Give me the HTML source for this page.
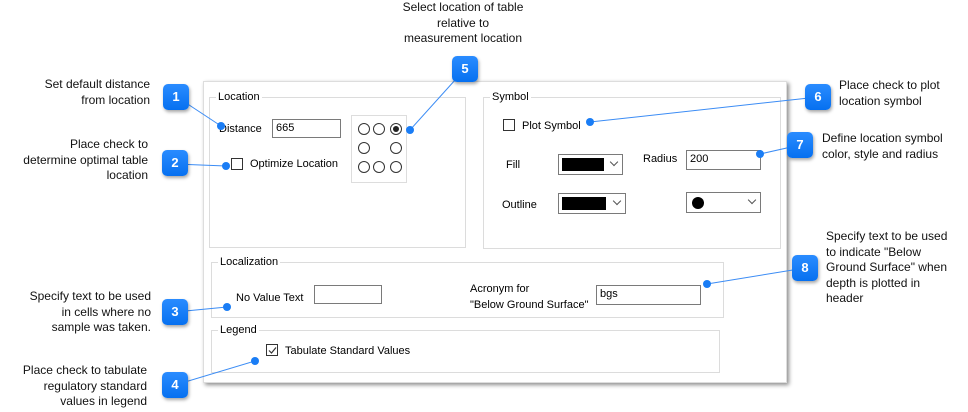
<!DOCTYPE html>
<html><head><style>
body{margin:0;width:968px;height:412px;background:#fff;position:relative;overflow:hidden;font-family:"Liberation Sans",Arial,sans-serif;}
.a{position:absolute;}
.t{position:absolute;font-size:12px;line-height:15.5px;color:#111;white-space:nowrap;}
.r{text-align:right;}
.panel{position:absolute;left:203px;top:81px;width:584px;height:302px;background:#fff;box-shadow:2px 2px 4px rgba(0,0,0,.45);border:1px solid #ddd;box-sizing:border-box;}
.g{position:absolute;border:1px solid #dcdcdc;}
.gl{position:absolute;background:#fff;font-size:11px;padding:0 2px;color:#000;top:-8px;left:6px;line-height:14px;}
.lb{position:absolute;font-size:11px;color:#000;white-space:nowrap;line-height:13px;}
.in{position:absolute;border:1px solid #7a7a7a;background:#fff;font-size:11px;box-sizing:border-box;padding:1px 3px;line-height:15px;}
.cb{position:absolute;width:12px;height:12px;border:1px solid #333;box-sizing:border-box;background:#fff;}
.rad{position:absolute;width:12px;height:12px;border:1px solid #333;border-radius:50%;box-sizing:border-box;}
.call{position:absolute;width:26px;height:26px;border-radius:5px;background:linear-gradient(#2a8cff,#0670f0);color:#fff;font-weight:bold;font-size:13px;text-align:center;line-height:26px;box-shadow:1px 2px 3px rgba(0,0,0,.35);}
.dd{position:absolute;border:1px solid #7a7a7a;background:#fff;box-sizing:border-box;}
.sw{position:absolute;left:3px;top:3px;background:#000;}
.chev{position:absolute;right:5px;top:4px;width:5px;height:5px;border-right:1px solid #555;border-bottom:1px solid #555;transform:rotate(45deg);}
</style></head><body>

<div class="t" style="left:392px;top:0px;width:142px;text-align:center;">Select location of table<br>relative to<br>measurement location</div>
<div class="t r" style="left:0;top:77px;width:150px;">Set default distance<br>from location</div>
<div class="t r" style="left:0;top:137px;width:148px;">Place check to<br>determine optimal table<br>location</div>
<div class="t r" style="left:0;top:289px;width:151px;">Specify text to be used<br>in cells where no<br>sample was taken.</div>
<div class="t r" style="left:0;top:363px;width:147px;">Place check to tabulate<br>regulatory standard<br>values in legend</div>
<div class="t" style="left:839px;top:78px;">Place check to plot<br>location symbol</div>
<div class="t" style="left:822px;top:131px;">Define location symbol<br>color, style and radius</div>
<div class="t" style="left:826px;top:229px;">Specify text to be used<br>to indicate "Below<br>Ground Surface" when<br>depth is plotted in<br>header</div>

<div class="panel"></div>
<!-- Location -->
<div class="g" style="left:209px;top:97px;width:255px;height:149px;"><div class="gl">Location</div></div>
<div class="lb" style="left:219px;top:123px;">Distance</div>
<div class="in" style="left:272px;top:119px;width:69px;height:19px;">665</div>
<div class="a" style="left:351px;top:115px;width:56px;height:68px;border:1px solid #ddd;box-sizing:border-box;"></div>
<div class="rad" style="left:358px;top:123px;"></div><div class="rad" style="left:373px;top:123px;"></div>
<div class="rad" style="left:390px;top:123px;"><div class="a" style="left:2px;top:2px;width:6px;height:6px;border-radius:50%;background:#222;"></div></div>
<div class="rad" style="left:358px;top:142px;"></div><div class="rad" style="left:390px;top:142px;"></div>
<div class="rad" style="left:358px;top:161px;"></div><div class="rad" style="left:373px;top:161px;"></div><div class="rad" style="left:390px;top:161px;"></div>
<div class="cb" style="left:231px;top:158px;"></div>
<div class="lb" style="left:250px;top:158px;">Optimize Location</div>
<!-- Symbol -->
<div class="g" style="left:483px;top:97px;width:296px;height:150px;"><div class="gl">Symbol</div></div>
<div class="cb" style="left:503px;top:119px;"></div>
<div class="lb" style="left:522px;top:120px;">Plot Symbol</div>
<div class="lb" style="left:506px;top:159px;">Fill</div>
<div class="dd" style="left:558px;top:154px;width:65px;height:21px;"><div class="sw" style="width:42px;height:13px;"></div><div class="chev"></div></div>
<div class="lb" style="left:502px;top:199px;">Outline</div>
<div class="dd" style="left:558px;top:193px;width:68px;height:21px;"><div class="sw" style="width:44px;height:13px;"></div><div class="chev"></div></div>
<div class="lb" style="left:643px;top:153px;">Radius</div>
<div class="in" style="left:686px;top:150px;width:75px;height:20px;">200</div>
<div class="dd" style="left:686px;top:192px;width:75px;height:21px;"><div class="a" style="left:5px;top:4px;width:12px;height:12px;border-radius:50%;background:#000;"></div><div class="chev"></div></div>
<!-- Localization -->
<div class="g" style="left:211px;top:262px;width:511px;height:54px;"><div class="gl">Localization</div></div>
<div class="lb" style="left:236px;top:292px;">No Value Text</div>
<div class="in" style="left:314px;top:285px;width:68px;height:19px;"></div>
<div class="lb" style="left:470px;top:281px;line-height:16px;">Acronym for<br>"Below Ground Surface"</div>
<div class="in" style="left:596px;top:285px;width:105px;height:20px;">bgs</div>
<!-- Legend -->
<div class="g" style="left:211px;top:330px;width:507px;height:41px;"><div class="gl">Legend</div></div>
<div class="cb" style="left:266px;top:344px;"><svg class="a" style="left:1px;top:1px" width="9" height="9"><path d="M1 4.5 L3.5 7 L8 1.5" stroke="#333" stroke-width="1.2" fill="none"/></svg></div>
<div class="lb" style="left:285px;top:345px;">Tabulate Standard Values</div>

<svg class="a" style="left:0;top:0" width="968" height="412">
<g stroke="#3b8cf5" stroke-width="1" fill="none">
<line x1="177" y1="97" x2="221" y2="126"/>
<line x1="175" y1="164" x2="226" y2="166"/>
<line x1="175" y1="312" x2="227" y2="307"/>
<line x1="175" y1="385" x2="255" y2="361"/>
<line x1="465" y1="69" x2="410" y2="130"/>
<line x1="818" y1="97" x2="590" y2="122"/>
<line x1="800" y1="145" x2="760" y2="154"/>
<line x1="805" y1="268" x2="707" y2="284"/>
</g>
<g fill="#1a7df5">
<circle cx="221" cy="126" r="4"/><circle cx="226" cy="166" r="4"/><circle cx="227" cy="307" r="4"/><circle cx="255" cy="361" r="4"/>
<circle cx="410" cy="130" r="4"/><circle cx="590" cy="122" r="4"/><circle cx="760" cy="154" r="4"/><circle cx="707" cy="284" r="4"/>
</g></svg>
<div class="call" style="left:163px;top:84px;">1</div>
<div class="call" style="left:162px;top:150px;">2</div>
<div class="call" style="left:162px;top:299px;">3</div>
<div class="call" style="left:162px;top:372px;">4</div>
<div class="call" style="left:452px;top:56px;">5</div>
<div class="call" style="left:805px;top:84px;">6</div>
<div class="call" style="left:787px;top:132px;">7</div>
<div class="call" style="left:792px;top:255px;">8</div>
</body></html>
